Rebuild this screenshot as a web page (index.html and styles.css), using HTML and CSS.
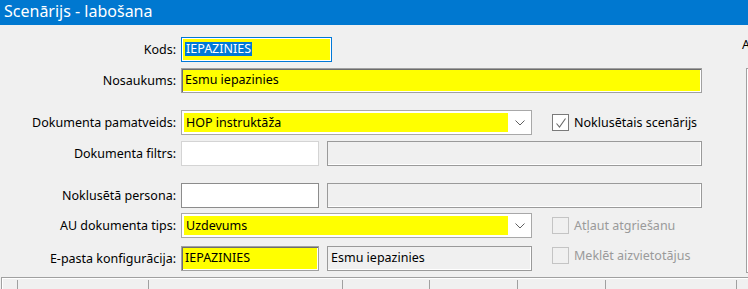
FILE: index.html
```html
<!DOCTYPE html>
<html lang="lv">
<head>
    <meta charset="UTF-8">
    <title>Scenārijs - labošana</title>
    <link rel="stylesheet" href="styles.css">
</head>
<body>

    <div class="titlebar">Scenārijs - labošana</div>

    <div class="form">
        <div class="main">
            <div class="row r-kods">
                <label class="label">Kods:</label>
                <div class="field req focus w-kods"><span class="sel">IEPAZINIES</span></div>
            </div>

            <div class="row r-nos">
                <label class="label">Nosaukums:</label>
                <div class="field req w-full">Esmu iepazinies</div>
            </div>

            <div class="row r-pamat">
                <label class="label">Dokumenta pamatveids:</label>
                <div class="combo">
                    <div class="combo-val">HOP instruktāža</div>
                    <svg class="chev" width="10" height="6" viewBox="0 0 10 6"><polyline points="0.5,0.5 5,5 9.5,0.5" fill="none" stroke="#606060" stroke-width="1"/></svg>
                </div>
                <div class="check">
                    <span class="box on">
                        <svg width="14" height="14" viewBox="0 0 14 14"><polyline points="2.5,7.5 5.5,11 11.5,2.5" fill="none" stroke="#6a6a6a" stroke-width="1.1"/></svg>
                    </span>
                    Noklusētais scenārijs
                </div>
            </div>

            <div class="row r-filtrs">
                <label class="label">Dokumenta filtrs:</label>
                <div class="field empty light w-short"></div>
                <div class="field ro w-long"></div>
            </div>

            <div class="row r-pers">
                <label class="label">Noklusētā persona:</label>
                <div class="field empty w-short"></div>
                <div class="field ro w-long"></div>
            </div>

            <div class="row r-au">
                <label class="label">AU dokumenta tips:</label>
                <div class="combo">
                    <div class="combo-val">Uzdevums</div>
                    <svg class="chev" width="10" height="6" viewBox="0 0 10 6"><polyline points="0.5,0.5 5,5 9.5,0.5" fill="none" stroke="#606060" stroke-width="1"/></svg>
                </div>
                <div class="check off">
                    <span class="box"></span>
                    Atļaut atgriešanu
                </div>
            </div>

            <div class="row r-epasts">
                <label class="label">E-pasta konfigurācija:</label>
                <div class="field req w-short">IEPAZINIES</div>
                <div class="field ro w-mid">Esmu iepazinies</div>
                <div class="check off up">
                    <span class="box"></span>
                    Meklēt aizvietotājus
                </div>
            </div>
        </div>

        <div class="side">
            <div class="side-title">A</div>
            <div class="side-box"></div>
        </div>
    </div>

    <div class="grid">
        <div class="col c0"></div>
        <div class="col c1"></div>
        <div class="col c2"></div>
        <div class="col c3"></div>
        <div class="col c4"></div>
        <div class="col c5"></div>
        <div class="col c6"></div>
        <div class="col c7"></div>
    </div>

</body>
</html>
```

FILE: styles.css
```css
body {
    margin: 0;
    width: 748px;
    height: 289px;
    overflow: hidden;
    background-color: #f0f0f0;
    font-family: "Noto Sans", "Open Sans", sans-serif;
    font-size: 12.5px;
    color: #000;
}
.titlebar {
    height: 25px;
    padding-left: 4px;
    background-color: #0078d0;
    color: #fff;
    font-size: 16px;
    line-height: 23px;
}
.form {
    display: flex;
    height: 252px;
}
.main {
    width: 740px;
    flex: none;
}
.row {
    display: flex;
    align-items: center;
    height: 25px;
}
.r-kods { margin-top: 12px; }
.r-nos { margin-top: 6px; }
.r-pamat { margin-top: 17px; }
.r-filtrs { margin-top: 6px; }
.r-pers { margin-top: 17px; }
.r-au { margin-top: 5px; }
.r-epasts { margin-top: 8px; }

.label {
    width: 176px;
    margin-right: 5px;
    text-align: right;
    white-space: nowrap;
}
.field {
    box-sizing: border-box;
    height: 25px;
    padding: 0 3px;
    line-height: 21px;
    border: 1px solid #a0a0a0;
    white-space: nowrap;
    overflow: hidden;
}
.field.req {
    background-color: #ffff00;
    box-shadow: inset 1px 1px 0 #6d6d6d, inset -1px -1px 0 #fff;
}
.field.focus {
    border-color: #0078d7;
    box-shadow: inset 0 0 0 1px #fff;
}
.sel {
    display: inline-block;
    padding: 0 1px;
    line-height: 14px;
    background-color: #0078d7;
    color: #fff;
}
.field.empty {
    background-color: #fff;
    border-color: #8c8c8c;
}
.field.empty.light {
    border-color: #d4d4d4;
}
.field.ro {
    margin-left: 8px;
    background-color: #f0f0f0;
    border-color: #9a9a9a;
    box-shadow: inset -1px -1px 0 #fff;
}
.w-kods { width: 151px; }
.w-full { width: 521px; }
.w-short { width: 138px; }
.w-long { width: 375px; }
.w-mid { width: 205px; }

.combo {
    box-sizing: border-box;
    display: flex;
    align-items: center;
    width: 351px;
    height: 25px;
    padding: 2px;
    background-color: #fff;
    border: 1px solid #a8a8a8;
}
.combo-val {
    width: 322px;
    height: 100%;
    padding-left: 2px;
    line-height: 20px;
    background-color: #ffff00;
}
.chev {
    margin-left: 7px;
}

.check {
    display: flex;
    align-items: center;
    margin-left: 20px;
    white-space: nowrap;
}
.check.up {
    align-self: flex-start;
    margin-top: 1px;
}
.box {
    box-sizing: border-box;
    display: flex;
    align-items: center;
    justify-content: center;
    width: 17px;
    height: 17px;
    margin-right: 5px;
    background-color: #fff;
    border: 1px solid #7a7a7a;
}
.check.off {
    color: #9a9a9a;
}
.check.off .box {
    background-color: #f0f0f0;
    border-color: #c4c4c4;
}

.side {
    flex: 1;
    overflow: hidden;
}
.side-title {
    height: 18px;
    margin-top: 11px;
    margin-left: 2px;
    line-height: 18px;
}
.side-box {
    height: 203px;
    margin-top: 14px;
    margin-left: 6px;
    border: 1px solid #a0a0a0;
    border-right: none;
    box-shadow: inset 1px 1px 0 #fff;
}

.grid {
    display: flex;
    height: 11px;
    margin-left: 1px;
    border-top: 1px solid #a0a0a0;
    border-left: 1px solid #a0a0a0;
    box-shadow: inset 1px 1px 0 #fff;
}
.col {
    box-sizing: border-box;
    flex: none;
    height: 9px;
    margin-top: 2px;
    border-right: 1px solid #a0a0a0;
}
.c0 { width: 16px; }
.c1 { width: 131px; }
.c2 { width: 194px; }
.c3 { width: 87px; }
.c4 { width: 88px; }
.c5 { width: 88px; }
.c6 { width: 131px; }
.c7 { width: 20px; }
```
